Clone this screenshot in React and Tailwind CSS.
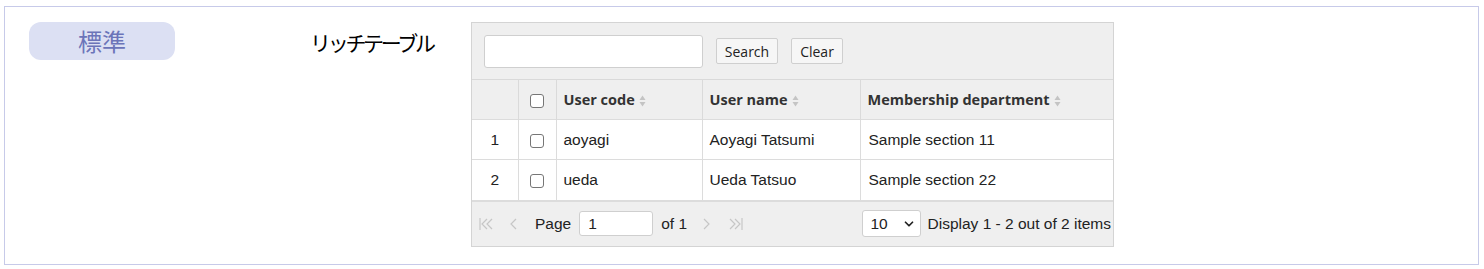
import { ChevronDown } from "lucide-react";

const rows = [
  { no: 1, code: "aoyagi", name: "Aoyagi Tatsumi", dept: "Sample section 11" },
  { no: 2, code: "ueda", name: "Ueda Tatsuo", dept: "Sample section 22" },
];

function SortIcon() {
  return (
    <svg width="7" height="12" viewBox="0 0 7 12" className="ml-[4px] inline-block">
      <path d="M3.5 0.5 L6.5 5 L0.5 5 Z" fill="#c4c4c4" />
      <path d="M3.5 11.5 L6.5 7 L0.5 7 Z" fill="#c4c4c4" />
    </svg>
  );
}

function Box() {
  return (
    <span className="inline-block w-[14px] h-[14px] border border-[#767676] rounded-[3px] bg-white align-middle" />
  );
}

function Chevron({ dir, double }) {
  const d = dir === "left" ? "M6 1 L1 6 L6 11" : "M1 1 L6 6 L1 11";
  return (
    <svg width={double ? 14 : 8} height="12" viewBox={double ? "0 0 14 12" : "0 0 8 12"} fill="none" stroke="#c6c6c6" strokeWidth="1.2">
      {double && dir === "left" && <path d="M1 0 L1 12" />}
      <path d={d} transform={double && dir === "left" ? "translate(2 0)" : ""} />
      {double && <path d={d} transform={dir === "left" ? "translate(7 0)" : "translate(5 0)"} />}
      {double && dir === "right" && <path d="M13 0 L13 12" />}
    </svg>
  );
}

export default function App() {
  return (
    <div className="w-[1484px] h-[269px] bg-white pt-[6px] pl-[4px]">
      <div className="w-[1475px] h-[259px] border border-[#c7cae9] flex items-start pt-[15px] pl-[24px]">
        {/* Badge */}
        <div className="w-[146px] h-[38px] rounded-[12px] bg-[#dce0f3] flex items-center justify-center text-[24px] text-[#6b74b9] font-['Noto_Sans_CJK_JP',sans-serif]">
          標準
        </div>

        {/* Title */}
        <div className="ml-[135px] w-[161px] pt-[5px] text-[21px] leading-[30px] tracking-[-3.3px] text-black font-['Noto_Sans_CJK_JP',sans-serif]">
          リッチテーブル
        </div>

        {/* Rich table */}
        <div className="w-[643px] border border-[#d4d4d4] bg-[#efefef]">
          <div className="h-[56px] flex items-center pl-[12px] gap-[13px]">
            <div className="w-[219px] h-[33px] bg-white border border-[#cfcfcf] rounded-[3px]" />
            <button className="h-[26px] w-[62px] bg-[#f6f6f6] border border-[#cfcfcf] rounded-[2px] text-[14px] text-[#222] font-['Open_Sans',sans-serif]">
              Search
            </button>
            <button className="h-[26px] w-[52px] bg-[#f6f6f6] border border-[#cfcfcf] rounded-[2px] text-[14px] text-[#222] font-['Open_Sans',sans-serif]">
              Clear
            </button>
          </div>

          <table className="w-full border-collapse table-fixed">
            <colgroup>
              <col className="w-[46px]" />
              <col className="w-[38px]" />
              <col className="w-[146px]" />
              <col className="w-[158px]" />
              <col />
            </colgroup>
            <thead>
              <tr className="h-[40px] bg-[#efefef] border-t border-[#d9d9d9] text-[14.5px] font-bold text-[#333] font-['Open_Sans',sans-serif]">
                <th className="border-r border-[#dadada]" />
                <th className="border-r border-[#dadada] text-center">
                  <Box />
                </th>
                <th className="border-r border-[#dadada] text-left pl-[7px]">
                  User code<SortIcon />
                </th>
                <th className="border-r border-[#dadada] text-left pl-[7px]">
                  User name<SortIcon />
                </th>
                <th className="text-left pl-[7px]">
                  Membership department<SortIcon />
                </th>
              </tr>
            </thead>
            <tbody className="bg-white text-[15.5px] text-[#222] font-['Liberation_Sans',Arial,sans-serif]">
              {rows.map((r) => (
                <tr key={r.no} className="h-[40px] border-t border-[#dcdcdc]">
                  <td className="border-r border-[#dcdcdc] text-center">{r.no}</td>
                  <td className="border-r border-[#dcdcdc] text-center">
                    <Box />
                  </td>
                  <td className="border-r border-[#dcdcdc] pl-[7px]">{r.code}</td>
                  <td className="border-r border-[#dcdcdc] pl-[7px]">{r.name}</td>
                  <td className="pl-[8px]">{r.dept}</td>
                </tr>
              ))}
            </tbody>
          </table>

          <div className="h-[46px] border-t-2 border-[#dcdcdc] flex items-center text-[15.5px] text-[#222] font-['Liberation_Sans',Arial,sans-serif]">
            <div className="flex items-center pl-[7px]">
              <Chevron dir="left" double />
              <span className="ml-[17px]"><Chevron dir="left" /></span>
              <span className="ml-[17px]">Page</span>
              <div className="ml-[8px] w-[74px] h-[25px] bg-white border border-[#cfcfcf] rounded-[3px] flex items-center pl-[8px]">
                1
              </div>
              <span className="ml-[8px]">of 1</span>
              <span className="ml-[16px]"><Chevron dir="right" /></span>
              <span className="ml-[18px]"><Chevron dir="right" double /></span>
            </div>
            <div className="ml-auto flex items-center pr-[2px]">
              <div className="w-[59px] h-[27px] bg-white border border-[#cfcfcf] rounded-[3px] flex items-center justify-between pl-[8px] pr-[4px]">
                <span>10</span>
                <ChevronDown size={14} strokeWidth={3} className="text-[#222]" />
              </div>
              <span className="ml-[7px]">Display 1 - 2 out of 2 items</span>
            </div>
          </div>
        </div>
      </div>
    </div>
  );
}
